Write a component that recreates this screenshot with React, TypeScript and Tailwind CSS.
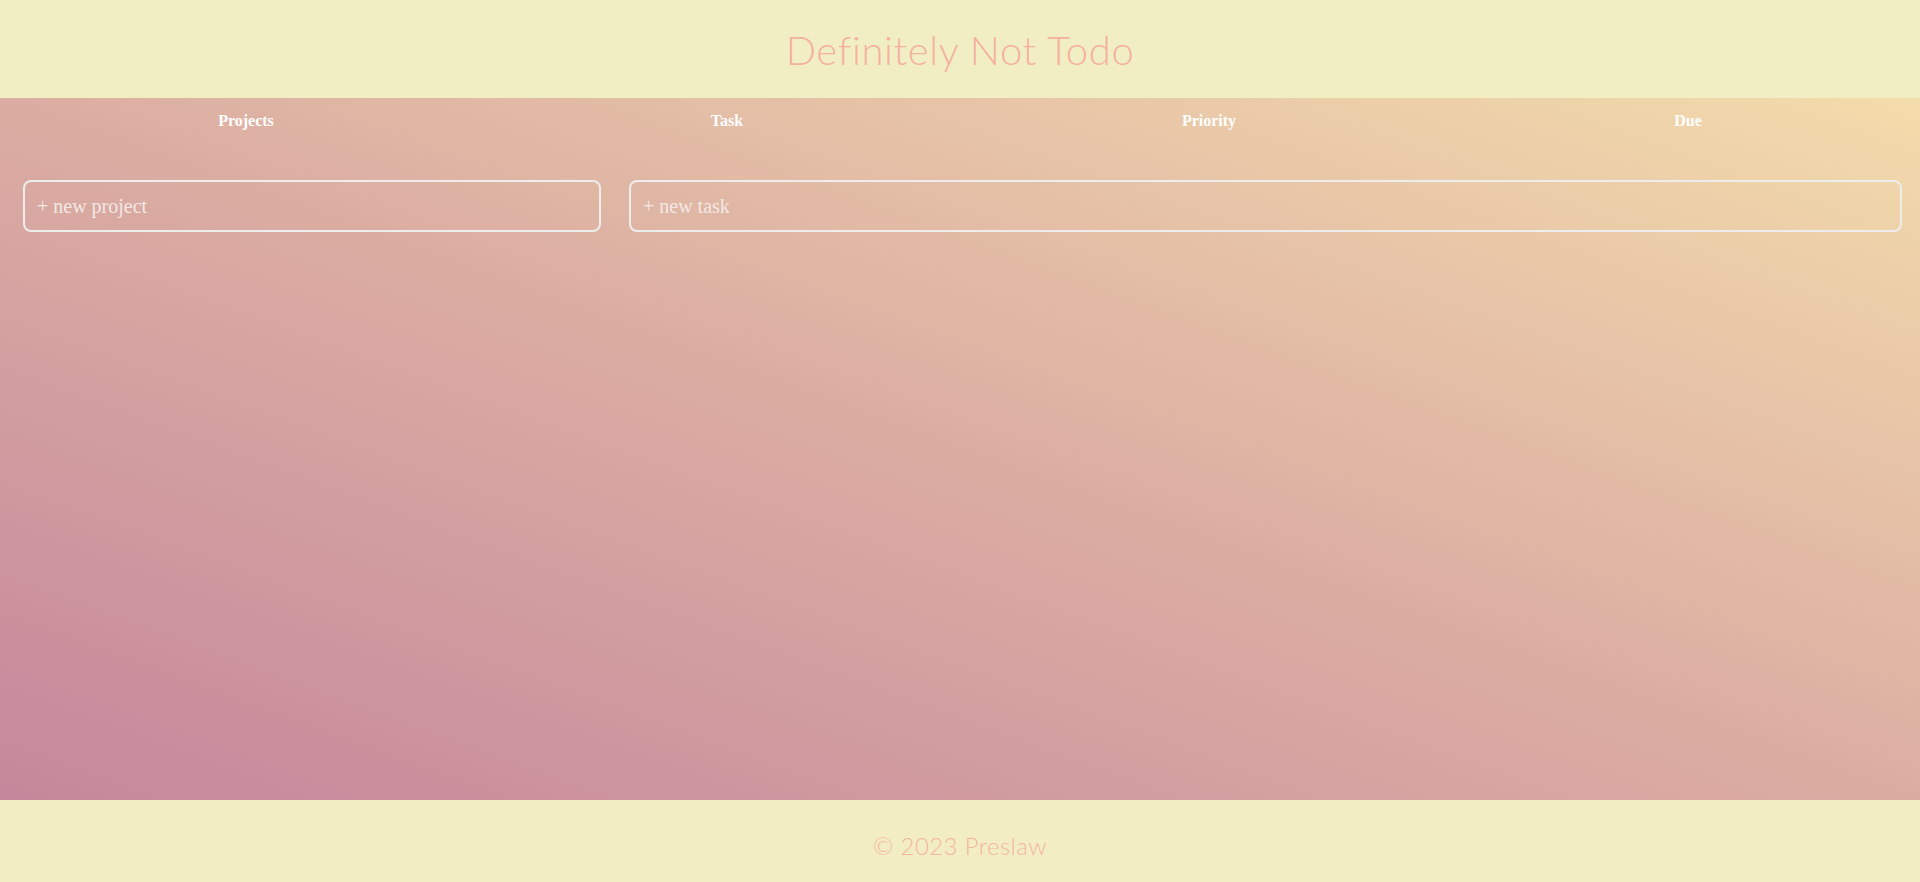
import React from "react";

const columns = ["Projects", "Task", "Priority", "Due"];

export default function App() {
  return (
    <div className="flex h-[882px] w-full flex-col">
      <header className="flex h-[98px] shrink-0 items-center justify-center bg-[#f2eec4] pt-[1px]">
        <h1 className="font-['Lato',sans-serif] text-[40px] font-light tracking-[0.6px] text-[#f4b1a0]">
          Definitely Not Todo
        </h1>
      </header>

      <main className="flex-1 bg-linear-to-tr from-[#c4879b] via-[#dbada2] to-[#f3dcab]">
        <div className="grid h-[44px] grid-cols-[492px_470px_494px_1fr] items-center pt-[2px] font-['Liberation_Serif',serif] text-[16px] font-bold text-white">
          {columns.map((c) => (
            <div key={c} className="text-center">
              {c}
            </div>
          ))}
        </div>

        <div className="mt-[38px] grid grid-cols-[578px_1fr] gap-[28px] pl-[23px] pr-[18px]">
          <input
            placeholder="+ new project"
            className="h-[52px] rounded-lg border-2 border-[#ededed] bg-transparent px-3 font-['Liberation_Serif',serif] text-[20px] text-white outline-none placeholder:text-[#f2e8e4]"
          />
          <input
            placeholder="+ new task"
            className="h-[52px] rounded-lg border-2 border-[#ededed] bg-transparent px-3 font-['Liberation_Serif',serif] text-[20px] text-white outline-none placeholder:text-[#f2e8e4]"
          />
        </div>
      </main>

      <footer className="flex h-[82px] shrink-0 items-center justify-center bg-[#f2edc3] pt-[9px]">
        <p className="font-['Lato',sans-serif] text-[24px] font-light tracking-[0.4px] text-[#f4b5a2]">© 2023 Preslaw</p>
      </footer>
    </div>
  );
}
